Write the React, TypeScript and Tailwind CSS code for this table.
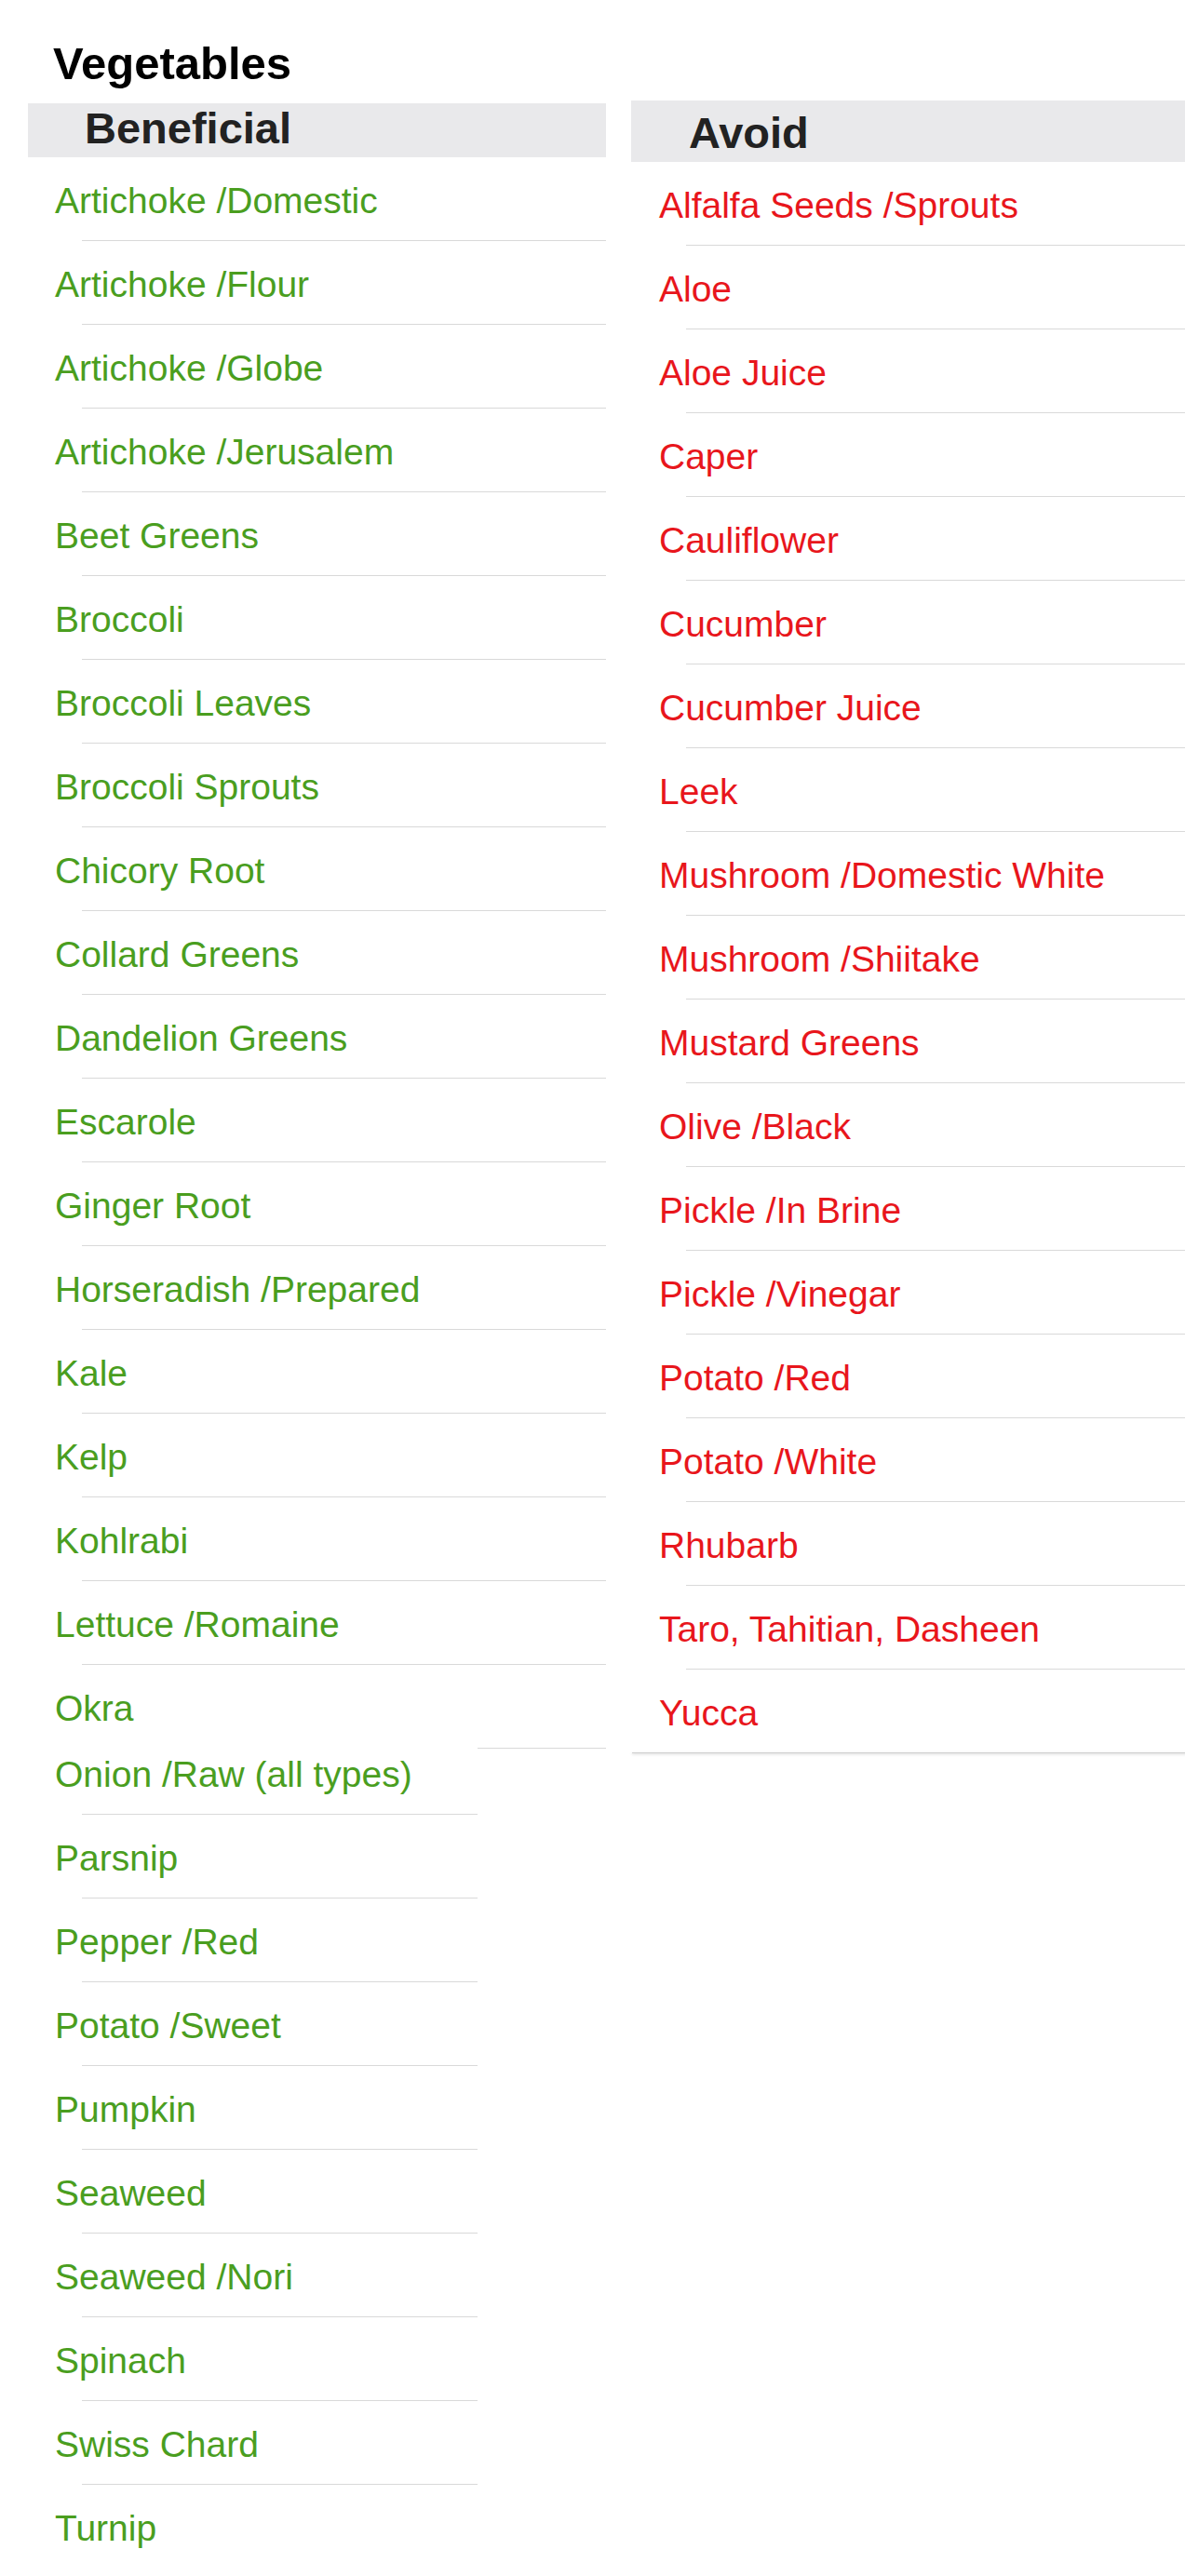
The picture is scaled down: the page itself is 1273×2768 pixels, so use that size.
import React from "react";

const beneficialA = [
  "Artichoke /Domestic",
  "Artichoke /Flour",
  "Artichoke /Globe",
  "Artichoke /Jerusalem",
  "Beet Greens",
  "Broccoli",
  "Broccoli Leaves",
  "Broccoli Sprouts",
  "Chicory Root",
  "Collard Greens",
  "Dandelion Greens",
  "Escarole",
  "Ginger Root",
  "Horseradish /Prepared",
  "Kale",
  "Kelp",
  "Kohlrabi",
  "Lettuce /Romaine",
  "Okra",
];

const beneficialB = [
  "Onion /Raw (all types)",
  "Parsnip",
  "Pepper /Red",
  "Potato /Sweet",
  "Pumpkin",
  "Seaweed",
  "Seaweed /Nori",
  "Spinach",
  "Swiss Chard",
  "Turnip",
];

const avoid = [
  "Alfalfa Seeds /Sprouts",
  "Aloe",
  "Aloe Juice",
  "Caper",
  "Cauliflower",
  "Cucumber",
  "Cucumber Juice",
  "Leek",
  "Mushroom /Domestic White",
  "Mushroom /Shiitake",
  "Mustard Greens",
  "Olive /Black",
  "Pickle /In Brine",
  "Pickle /Vinegar",
  "Potato /Red",
  "Potato /White",
  "Rhubarb",
  "Taro, Tahitian, Dasheen",
  "Yucca",
];

function Row({
  label,
  color,
  last,
  lastStyle,
}: {
  label: string;
  color: "green" | "red";
  last: boolean;
  lastStyle: "shadow" | "plain" | "none";
}) {
  return (
    <div>
      <div
        className={
          "h-[89px] pl-[29px] pt-[27px] text-[39px] leading-none whitespace-nowrap " +
          (color === "green" ? "text-[#4a9e1f]" : "text-[#e8161c]")
        }
      >
        {label}
      </div>
      {!last && <div className="ml-[58px] h-px bg-[#d9d9d9]" />}
      {last && lastStyle === "shadow" && (
        <div className="h-px bg-[#cfcfcf] shadow-[0_1px_3px_rgba(0,0,0,0.25)]" />
      )}
      {last && lastStyle === "plain" && <div className="h-px bg-[#d9d9d9]" />}
    </div>
  );
}

export default function App() {
  return (
    <div
      className="min-h-[2768px] w-full overflow-hidden bg-white"
      style={{ fontFamily: '"Liberation Sans", Arial, Helvetica, sans-serif' }}
    >
      <div className="pl-[57px] pt-[44px] text-[49px] font-bold leading-none text-black">
        Vegetables
      </div>
      <div className="mt-[15px] flex items-start pl-[30px] gap-[27px]">
        {/* Beneficial column */}
        <div className="w-[621px] shrink-0 mt-[3px]">
          <div className="h-[58px] bg-[#e9e9eb] pl-[61px] pt-[3px] text-[47px] font-bold leading-none text-[#222]">
            Beneficial
          </div>
          <div>
            {beneficialA.map((item, i) => (
              <Row
                key={item}
                label={item}
                color="green"
                last={i === beneficialA.length - 1}
                lastStyle="plain"
              />
            ))}
          </div>
          <div className="relative -mt-[19px] w-[483px] bg-white">
            {beneficialB.map((item, i) => (
              <Row
                key={item}
                label={item}
                color="green"
                last={i === beneficialB.length - 1}
                lastStyle="none"
              />
            ))}
          </div>
        </div>
        {/* Avoid column */}
        <div className="w-[620px] shrink-0">
          <div className="h-[66px] bg-[#e9e9eb] pl-[62px] pt-[11px] text-[47px] font-bold leading-none text-[#222]">
            Avoid
          </div>
          <div className="pl-[1px]">
            {avoid.map((item, i) => (
              <Row
                key={item}
                label={item}
                color="red"
                last={i === avoid.length - 1}
                lastStyle="shadow"
              />
            ))}
          </div>
        </div>
      </div>
    </div>
  );
}
